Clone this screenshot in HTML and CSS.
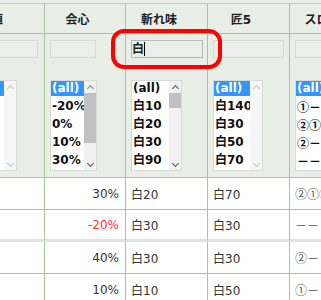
FILE: index.html
```html
<!DOCTYPE html>
<html lang="ja">
<head>
<meta charset="utf-8">
<title>装備一覧</title>
<link rel="stylesheet" href="styles.css">
</head>
<body>
<div class="page">
  <table class="grid">
    <colgroup>
      <col class="c0"><col class="c1"><col class="c2"><col class="c3"><col class="c4">
    </colgroup>
    <thead>
      <tr class="head">
        <th class="h0">期待値</th><th>会心</th><th>斬れ味</th><th>匠5</th><th>スロット</th>
      </tr>
      <tr class="filters">
        <td>
          <div class="filter f0">
            <input class="fin" type="text" aria-label="期待値で絞り込み">
            <div class="listbox">
              <ul class="opts">
                <li class="sel">(all)</li><li>180</li><li>190</li><li>200</li><li>210</li>
              </ul>
              <div class="sbar off"><span class="arr up"></span><span class="track"></span><span class="arr down"></span></div>
            </div>
          </div>
        </td>
        <td>
          <div class="filter f1">
            <input class="fin" type="text" aria-label="会心で絞り込み">
            <div class="listbox">
              <ul class="opts">
                <li class="sel">(all)</li><li>-20%</li><li>0%</li><li>10%</li><li>30%</li>
              </ul>
              <div class="sbar"><span class="arr up dim"></span><span class="track"><span class="thumb t-long"></span></span><span class="arr down"></span></div>
            </div>
          </div>
        </td>
        <td>
          <div class="filter f2">
            <div class="fin focus" role="textbox" aria-label="斬れ味で絞り込み">白<span class="caret"></span></div>
            <div class="listbox">
              <ul class="opts">
                <li>(all)</li><li>白10</li><li>白20</li><li>白30</li><li>白90</li>
              </ul>
              <div class="sbar"><span class="arr up"></span><span class="track"><span class="thumb t-short"></span></span><span class="arr down"></span></div>
            </div>
          </div>
        </td>
        <td>
          <div class="filter f3">
            <input class="fin" type="text" aria-label="匠5で絞り込み">
            <div class="listbox">
              <ul class="opts">
                <li class="sel">(all)</li><li>白140</li><li>白30</li><li>白50</li><li>白70</li>
              </ul>
              <div class="sbar off"><span class="arr up"></span><span class="track"></span><span class="arr down"></span></div>
            </div>
          </div>
        </td>
        <td>
          <div class="filter f4">
            <input class="fin" type="text" aria-label="スロットで絞り込み">
            <div class="listbox">
              <ul class="opts">
                <li class="sel">(all)</li><li class="cj">①－</li><li class="cj">②①</li><li class="cj">②－</li><li class="cj">－－</li>
              </ul>
              <div class="sbar"><span class="arr up"></span><span class="track"></span><span class="arr down"></span></div>
            </div>
          </div>
        </td>
      </tr>
    </thead>
    <tbody>
      <tr>
        <td></td><td class="num">30%</td><td>白20</td><td>白70</td><td class="slot">②①<span class="hl">①</span></td>
      </tr>
      <tr class="band">
        <td></td><td class="num neg">-20%</td><td>白30</td><td>白30</td><td class="slot">－－</td>
      </tr>
      <tr>
        <td></td><td class="num">40%</td><td>白30</td><td>白30</td><td class="slot">②－</td>
      </tr>
      <tr>
        <td></td><td class="num">10%</td><td>白10</td><td>白50</td><td class="slot">①－</td>
      </tr>
    </tbody>
  </table>
  <div class="callout" aria-hidden="true"></div>
</div>
</body>
</html>
```

FILE: styles.css
```css
* { box-sizing: border-box; }

html, body {
  margin: 0;
  padding: 0;
}

body {
  width: 321px;
  height: 300px;
  overflow: hidden;
  background: #e9eee7;
  font-family: "DejaVu Sans", "Noto Sans CJK JP", sans-serif;
  font-size: 12px;
  color: #333;
}

.page {
  position: relative;
  padding-top: 3px;
}

.grid {
  border-collapse: separate;
  border-spacing: 0;
  table-layout: fixed;
  width: 418px;
  margin-left: -35px;
}

col.c0 { width: 80px; }
col.c1 { width: 81px; }
col.c2 { width: 82px; }
col.c3 { width: 82px; }
col.c4 { width: 93px; }

.head th {
  height: 31px;
  padding: 0 17px 0 2px;
  border-top: 1px solid #bccfb5;
  border-right: 1px solid #a9c3a0;
  border-bottom: 1px solid #a9c3a0;
  background: #e9eee7;
  font-family: "DejaVu Sans", "Noto Sans CJK JP", sans-serif;
  font-weight: bold;
  font-size: 12px;
  color: #222;
  text-align: center;
  vertical-align: middle;
  white-space: nowrap;
  overflow: hidden;
}

.head th.h0 { padding-right: 43px; }

.filters td {
  padding: 6px 5px 6px 5px;
  border-right: 1px solid #a9c3a0;
  border-bottom: 1px solid #a9c3a0;
  background: #e9eee7;
  vertical-align: top;
}

.filter {
  display: flex;
  flex-direction: column;
  align-items: flex-start;
  gap: 22px;
}

.fin {
  display: block;
  height: 18px;
  margin: 0;
  padding: 0;
  border: 1px solid #d6dad3;
  background: #ebeee9;
  font-family: "DejaVu Sans", "Noto Sans CJK JP", sans-serif;
  font-weight: bold;
  font-size: 12px;
  line-height: 16px;
  color: #222;
  outline: none;
}

.fin.focus {
  border-color: #b3b8b1;
  display: flex;
  align-items: center;
  white-space: nowrap;
}

.caret {
  display: inline-block;
  width: 1px;
  height: 14px;
  background: #000;
}

.listbox {
  display: flex;
  height: 91px;
  border: 1px solid #d7dad5;
  background: #fff;
}

.opts {
  flex: 1;
  min-width: 0;
  margin: 0;
  padding: 0;
  list-style: none;
  overflow: hidden;
}

.opts li {
  height: 15px;
  margin-bottom: 3px;
  padding-left: 1px;
  line-height: 15px;
  font-weight: bold;
  font-size: 12px;
  color: #111;
  white-space: nowrap;
  overflow: hidden;
}

.opts li.cj {
  font-family: "Noto Sans CJK JP", sans-serif;
  font-weight: bold;
  color: #111;
}

.opts li.sel {
  background: #3395ff;
  color: #fff;
}

.sbar {
  width: 12px;
  flex: none;
  display: flex;
  flex-direction: column;
  background: #f1f1f1;
}

.sbar.off { background: #f6f6f6; }

.arr {
  height: 12px;
  flex: none;
  display: flex;
  align-items: center;
  justify-content: center;
  color: #505050;
}

.arr::before {
  content: "";
  width: 4px;
  height: 4px;
  border-left: 1.6px solid currentColor;
  border-top: 1.6px solid currentColor;
}

.arr.up::before { transform: translateY(1px) rotate(45deg); }
.arr.down::before { transform: translateY(-1px) rotate(225deg); }

.arr.dim { color: #8c8c8c; }
.sbar.off .arr { color: #c4c4c4; }

.track {
  flex: 1;
  display: flex;
  flex-direction: column;
}

.thumb {
  display: block;
  background: #c1c1c1;
}

.t-long { height: 50px; }
.t-short { height: 15px; }

.f0 .fin { width: 68px; }
.f0 .listbox { width: 47px; }
.f1 .fin { width: 46px; }
.f1 .listbox { width: 47px; }
.f2 .fin { width: 72px; }
.f2 .listbox { width: 51px; }
.f3 .fin { width: 71px; }
.f3 .listbox { width: 50px; }
.f4 .fin { width: 83px; }
.f4 .listbox { width: 56px; }

tbody td {
  height: 32px;
  padding: 0 6px 0 5px;
  border-right: 1px solid #a9c3a0;
  border-bottom: 1px solid #a9c3a0;
  background: #fff;
  vertical-align: middle;
  white-space: nowrap;
  overflow: hidden;
  color: #333;
}

tbody tr.band td {
  border-bottom: 3px solid #dfe3de;
}

tbody td.num { text-align: right; }
tbody td.neg { color: #ff3333; }

tbody td.slot {
  font-family: "Noto Sans CJK JP", sans-serif;
  color: #555;
}
.hl { color: #d9822b; }

.callout {
  position: absolute;
  left: 111px;
  top: 29px;
  width: 111px;
  height: 40px;
  border: 4px solid #ff0000;
  border-radius: 13px;
}
```
